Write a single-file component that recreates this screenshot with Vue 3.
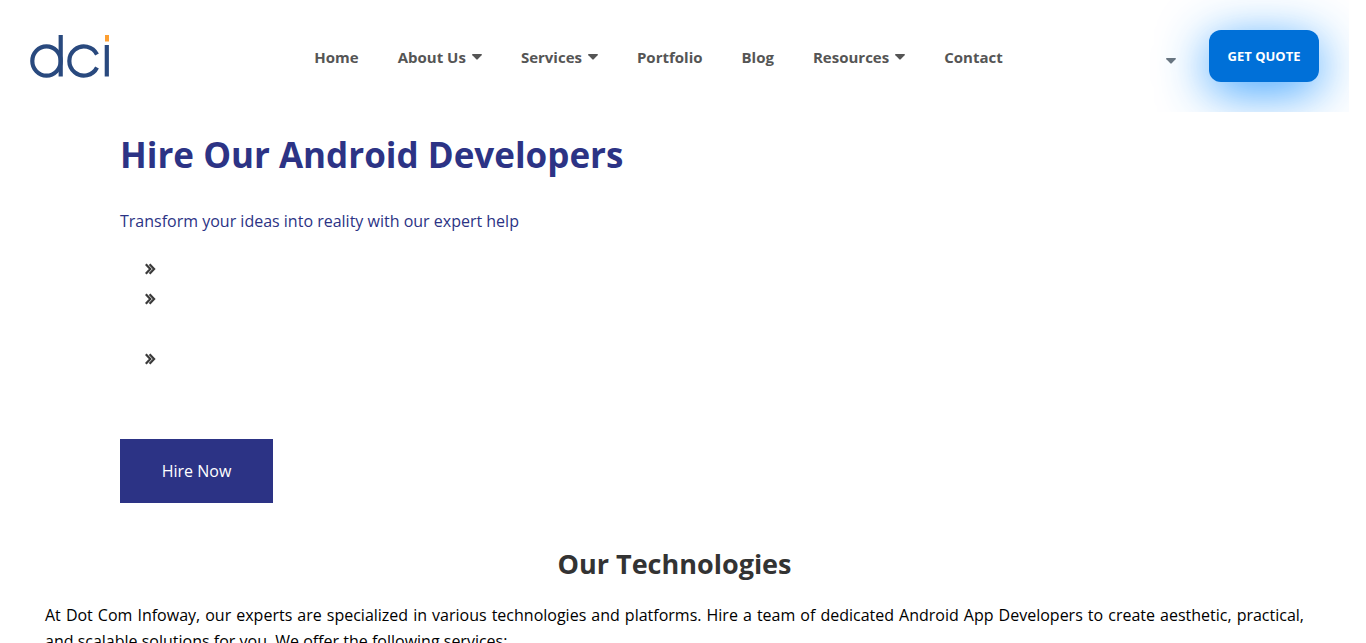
<script setup>
const links = [
  { label: 'Home' },
  { label: 'About Us', menu: true },
  { label: 'Services', menu: true },
  { label: 'Portfolio' },
  { label: 'Blog' },
  { label: 'Resources', menu: true },
  { label: 'Contact' },
]
const rows = ['single', 'double', 'double']
</script>

<template>
  <div class="page">
    <header class="header">
      <a class="logo" href="#" aria-label="DCI home">
        <svg width="80" height="44" viewBox="0 0 80 44" fill="none">
          <g stroke="#29497e" stroke-width="4.200">
            <ellipse cx="16.5" cy="26" rx="14.2" ry="14.7" />
            <path d="M30.7 0v41.500" />
            <path d="M67 19.500A14.600 14.600 0 1 0 67 32.500" />
            <path d="M76.800 10v31.500" />
          </g>
          <path d="M75 0h4v6.500h-4z" fill="#fd9f31" />
        </svg>
      </a>
      <nav class="nav" aria-label="Main">
        <a v-for="link in links" :key="link.label" href="#">
          {{ link.label }}
          <svg v-if="link.menu" class="caret" width="10" height="6" viewBox="0 0 10 6">
            <path d="M.7 0h8.600Q10.400.3 9.600 1.300L5.700 5.300Q5 6 4.300 5.300L.4 1.300Q-.4.3.7 0z" fill="currentColor" />
          </svg>
        </a>
      </nav>
      <div class="actions">
        <button class="language" type="button" aria-label="Choose language">
          <svg width="10" height="6" viewBox="0 0 10 6">
            <path d="M.7 0h8.600Q10.400.3 9.600 1.300L5.700 5.300Q5 6 4.300 5.300L.4 1.300Q-.4.3.7 0z" fill="currentColor" />
          </svg>
        </button>
        <a class="quote" href="#">GET QUOTE</a>
      </div>
    </header>

    <main>
      <section class="hero">
        <h1>Hire Our Android Developers</h1>
        <p>Transform your ideas into reality with our expert help</p>
        <ul>
          <li v-for="(row, i) in rows" :key="i" :class="row">
            <svg width="12" height="12" viewBox="0 0 12 12" fill="none" stroke="#3b3b3b" stroke-width="2.200">
              <path d="M.8 1.200L5.300 6L.8 10.800M4.600 1.200L9.100 6l-4.500 4.800" />
            </svg>
          </li>
        </ul>
        <a class="hire" href="#">Hire Now</a>
      </section>

      <section class="technologies">
        <h2>Our Technologies</h2>
        <p>
          At Dot Com Infoway, our experts are specialized in various technologies and platforms. Hire a team of
          dedicated Android App Developers to create aesthetic, practical, and scalable solutions for you. We offer
          the following services:
        </p>
      </section>
    </main>
  </div>
</template>

<style>
body {
  margin: 0;
  background: #fff;
}
</style>

<style scoped>
.page {
  box-sizing: border-box;
  height: 100vh;
  margin-right: 17px;
  overflow: hidden;
  background: #fff;
  color: #000;
  font: 16px/26px "Open Sans", sans-serif;
}
a {
  color: inherit;
  text-decoration: none;
}
.header {
  display: grid;
  grid-template-columns: 1fr auto 1fr;
  align-items: center;
  height: 112px;
  padding: 0 30px;
  overflow: hidden;
  box-sizing: border-box;
}
.logo,
.nav {
  padding-top: 2px;
}
.logo svg {
  display: block;
}
.nav {
  display: flex;
  gap: 39px;
  margin-right: 32px;
  color: #555;
  font-weight: 700;
  font-size: 15px;
  white-space: nowrap;
}
.nav a {
  display: flex;
  align-items: center;
  gap: 6px;
}
.actions {
  display: flex;
  justify-content: flex-end;
  align-items: center;
  gap: 33px;
}
.language {
  border: 0;
  padding: 10px 0 0;
  background: none;
  color: #6c757d;
  line-height: 0;
}
.quote {
  width: 110px;
  border-radius: 12px;
  background: #0070d8;
  box-shadow: 0 10px 50px #1890ffdd;
  color: #fff;
  font-size: 13px;
  font-weight: 700;
  line-height: 52px;
  text-align: center;
}
.hero {
  position: relative;
  padding: 20px 120px 0;
  background: #fff;
  color: #2c3385;
}
h1 {
  margin: 0;
  font-size: 35px;
  font-weight: 700;
  line-height: 46px;
}
.hero p {
  margin: 30px 0 20px;
}
ul {
  margin: 0;
  padding: 0 0 0 25px;
  list-style: none;
}
li {
  box-sizing: border-box;
  height: 30px;
  padding-top: 9px;
  line-height: 0;
}
.double {
  height: 60px;
}
.hire {
  display: inline-block;
  min-width: 153px;
  margin-top: 35px;
  background: #2c3385;
  color: #fff;
  line-height: 64px;
  text-align: center;
}
.technologies {
  padding: 0 45px;
}
h2 {
  margin: 43px 0 20px;
  color: #333;
  font-size: 27px;
  font-weight: 700;
  line-height: 36px;
  text-align: center;
}
.technologies p {
  margin: 0;
  text-align: justify;
}
</style>
